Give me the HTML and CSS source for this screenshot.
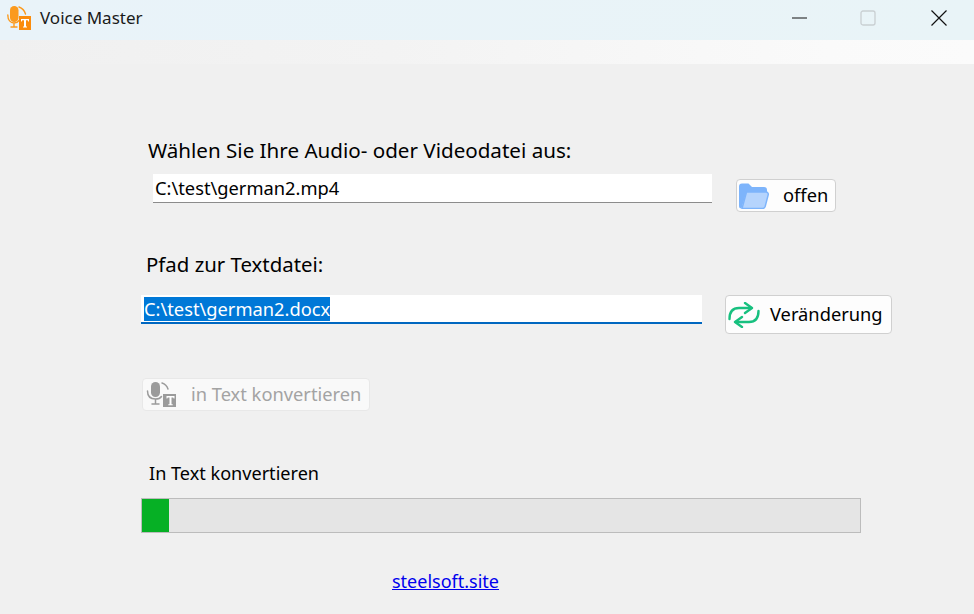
FILE: index.html
```html
<!DOCTYPE html>
<html lang="de">
<head>
<meta charset="utf-8">
<title>Voice Master</title>
<link rel="stylesheet" href="styles.css">
</head>
<body>
<div class="app">
  <header class="titlebar">
    <svg class="logo" width="26" height="30" viewBox="0 0 26 30">
      <rect x="3" y="1" width="8.500" height="16" rx="4.200" fill="#fb9a1e"/>
      <path d="M.8 10c0 5 2.700 8 6.200 8 2.500 0 4-1 5-2.500M7 18v3.500M4 22h6" fill="none" stroke="#fb9a1e" stroke-width="1.400" stroke-linecap="round"/>
      <path d="M12 2c3 1 5.500 3.500 6.500 7" fill="none" stroke="#fb9a1e" stroke-width="1.400" stroke-linecap="round"/>
      <rect x="12" y="11" width="12" height="14" fill="#fb8c0c"/>
      <path d="M14 14h8v2.500h-.8l-.5-1.200h-1.700v6.200h1v1h-4v-1h1v-6.200h-1.700l-.5 1.200H14z" fill="#fff"/>
    </svg>
    <span class="app-name">Voice Master</span>
    <div class="win-controls">
      <svg class="win-min" width="16" height="16" viewBox="0 0 16 16"><path d="M3 8h15" stroke="#111" stroke-width="1"/></svg>
      <svg width="16" height="16" viewBox="0 0 16 16"><rect x="1" y="1" width="14" height="14" rx="2" fill="none" stroke="#c9cfd2" stroke-width="1.300"/></svg>
      <svg width="16" height="16" viewBox="0 0 16 16"><path d="M.5.500l15 15M15.500.500l-15 15" stroke="#111" stroke-width="1.200"/></svg>
    </div>
  </header>
  <div class="band"></div>
  <main class="content">
    <div class="label label-audio">Wählen Sie Ihre Audio- oder Videodatei aus:</div>
    <div class="row row-audio">
      <div class="field field-audio">C:\test\german2.mp4</div>
      <button class="btn btn-open">
        <svg width="30" height="26" viewBox="0 0 30 26">
          <path d="M0 3.500A3 3 0 0 1 3 .5h6.500l3.500 3.500h12a3 3 0 0 1 3 3v2H7.500L2.500 25.500A2.500 2.500 0 0 1 0 23z" fill="#7db4fb"/>
          <path d="M7.500 9h19.500a2.300 2.300 0 0 1 2.200 2.900l-3 11.500a3 3 0 0 1-3 2.100H3z" fill="#b5d4fd" stroke="#7db4fb" stroke-width="1.500" stroke-linejoin="round"/>
        </svg>
        <span>offen</span>
      </button>
    </div>
    <div class="label label-text">Pfad zur Textdatei:</div>
    <div class="row row-text">
      <div class="field field-text"><span class="selected">C:\test\german2.docx</span></div>
      <button class="btn btn-change">
        <svg width="32" height="26" viewBox="0 0 32 26" fill="none" stroke="#17c07f" stroke-width="2.400" stroke-linecap="round" stroke-linejoin="round">
          <path d="M1.500 17C1.500 10 5 6 11 6h12"/>
          <path d="M17 1l7 5-7 5"/>
          <path d="M30.500 9C30.500 16 27 20 21 20H8"/>
          <path d="M14 15l-7 5 7 5"/>
        </svg>
        <span>Veränderung</span>
      </button>
    </div>
    <button class="btn btn-convert" disabled>
      <svg width="30" height="28" viewBox="0 0 30 28">
        <rect x="5" y="1" width="9" height="15" rx="4.500" fill="#9b9b9b"/>
        <path d="M1.500 10c0 5 3 8 8 8 3 0 5-1 6-2.500M9.500 18v4M6 23h7" fill="none" stroke="#9b9b9b" stroke-width="1.500" stroke-linecap="round"/>
        <path d="M16 2c3 1 5 3 6 6" fill="none" stroke="#9b9b9b" stroke-width="1.500" stroke-linecap="round"/>
        <rect x="17" y="13" width="15" height="13" fill="#9b9b9b"/>
        <path d="M20.500 15h8v2.500h-.8l-.5-1h-1.700v6.700h1.200v1.100h-4.400v-1.100h1.200v-6.700h-1.700l-.5 1h-.8z" fill="#fff"/>
      </svg>
      <span>in Text konvertieren</span>
    </button>
    <div class="label label-progress">In Text konvertieren</div>
    <div class="progress"><div class="progress-fill" style="width:27px"></div></div>
    <a class="link" href="#">steelsoft.site</a>
  </main>
</div>
</body>
</html>
```
FILE: styles.css
```css
* { box-sizing: border-box; }
html, body { margin: 0; height: 100%; }
body { background: #f0f0f0; font-family: "Noto Sans", "Open Sans", sans-serif; color: #000; overflow: hidden; }
.app { width: 974px; height: 614px; display: flex; flex-direction: column; }
.titlebar { height: 40px; flex: none; background: linear-gradient(90deg, #e9f3f9, #e9f4f7); display: flex; align-items: center; padding-left: 7px; }
.logo { margin-top: 0; overflow: visible; flex: none; }
.app-name { font-size: 17px; margin: -5px 0 0 7px; color: #1a1a1a; }
.win-controls { margin-left: auto; display: flex; align-items: center; gap: 55px; padding-right: 27px; margin-top: -5px; }
.win-min { overflow: visible; }
.band { height: 24px; flex: none; background: linear-gradient(90deg, #f0f0f0 0%, #f3f3f3 40%, #fafafa 85%, #fbfbfb 100%); }
.content { flex: 1; padding-left: 141px; display: flex; flex-direction: column; align-items: flex-start; font-size: 18.300px; }
.label { font-size: 20.400px; line-height: 26px; white-space: nowrap; }
.label-audio { margin: 73px 0 0 7px; font-size: 20.600px; }
.row { display: flex; align-items: flex-start; }
.row-audio { margin: 11px 0 0 12px; }
.field { background: #fff; font-size: 18.300px; white-space: nowrap; }
.field-audio { width: 559px; height: 29px; border-bottom: 1px solid #8c8c8c; padding-left: 2px; line-height: 27px; }
.btn { display: flex; align-items: center; background: #fdfdfd; border: 1px solid #d0d0d0; border-radius: 4px; font: inherit; font-size: 18.300px; color: #000; padding: 0; }
.btn span { margin-bottom: 2px; }
.btn-open { width: 100px; height: 33px; margin: 5px 0 0 24px; padding-left: 2px; }
.btn-open span { margin-left: 14px; }
.label-text { margin: 39px 0 0 5px; }
.row-text { margin-top: 18px; }
.field-text { width: 561px; height: 29px; border-bottom: 2px solid #0067c0; padding-left: 3px; line-height: 28px; }
.selected { display: inline-block; background: #0078d7; color: #fff; height: 24px; line-height: 24px; vertical-align: top; margin-top: 2px; }
.btn-change { width: 167px; height: 39px; margin: 0 0 0 23px; padding-left: 2px; }
.btn-change span { margin-left: 10px; }
.btn-convert { width: 228px; height: 33px; margin: 44px 0 0 1px; background: #f9f9f9; border-color: #e8e8e8; color: #a3a3a3; padding-left: 3px; }
.btn-convert span { margin-left: 15px; }
.label-progress { margin: 49px 0 0 8px; font-size: 18.100px; }
.progress { width: 720px; height: 35px; margin-top: 12px; background: #e5e5e5; border: 1px solid #bcbcbc; }
.progress-fill { height: 100%; background: #06b025; }
.link { margin: 36px 0 0 251px; font-size: 18px; color: #0000ee; text-decoration: underline; }
```
